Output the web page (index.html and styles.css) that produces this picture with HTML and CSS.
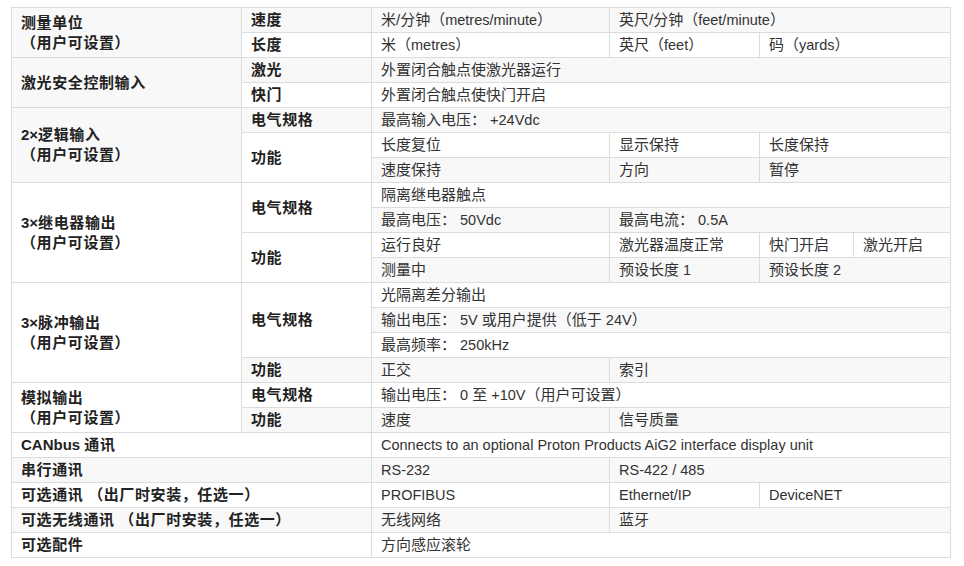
FILE: index.html
```html
<!DOCTYPE html>
<html lang="zh-CN">
<head>
<meta charset="utf-8">
<title>规格</title>
<link rel="stylesheet" href="styles.css">
</head>
<body>
<table class="spec">
  <colgroup>
    <col class="c1"><col class="c2"><col class="c3"><col class="c4"><col class="c5"><col class="c6">
  </colgroup>
  <tbody>
    <tr>
      <th rowspan="2">测量单位<br>（用户可设置）</th>
      <th>速度</th>
      <td>米/分钟（<span class="en">metres/minute</span>）</td>
      <td colspan="3">英尺/分钟（<span class="en">feet/minute</span>）</td>
    </tr>
    <tr>
      <th>长度</th>
      <td>米（<span class="en">metres</span>）</td>
      <td>英尺（<span class="en">feet</span>）</td>
      <td colspan="2">码（<span class="en">yards</span>）</td>
    </tr>
    <tr>
      <th rowspan="2">激光安全控制输入</th>
      <th>激光</th>
      <td colspan="4">外置闭合触点使激光器运行</td>
    </tr>
    <tr>
      <th>快门</th>
      <td colspan="4">外置闭合触点使快门开启</td>
    </tr>
    <tr>
      <th rowspan="3"><span class="en">2×</span>逻辑输入<br>（用户可设置）</th>
      <th>电气规格</th>
      <td colspan="4">最高输入电压：<span class="en"> +24Vdc</span></td>
    </tr>
    <tr>
      <th rowspan="2">功能</th>
      <td>长度复位</td>
      <td>显示保持</td>
      <td colspan="2">长度保持</td>
    </tr>
    <tr>
      <td>速度保持</td>
      <td>方向</td>
      <td colspan="2">暂停</td>
    </tr>
    <tr>
      <th rowspan="4"><span class="en">3×</span>继电器输出<br>（用户可设置）</th>
      <th rowspan="2">电气规格</th>
      <td colspan="4">隔离继电器触点</td>
    </tr>
    <tr>
      <td>最高电压：<span class="en"> 50Vdc</span></td>
      <td colspan="3">最高电流：<span class="en"> 0.5A</span></td>
    </tr>
    <tr>
      <th rowspan="2">功能</th>
      <td>运行良好</td>
      <td>激光器温度正常</td>
      <td>快门开启</td>
      <td>激光开启</td>
    </tr>
    <tr>
      <td>测量中</td>
      <td>预设长度<span class="en"> 1</span></td>
      <td colspan="2">预设长度<span class="en"> 2</span></td>
    </tr>
    <tr>
      <th rowspan="4"><span class="en">3×</span>脉冲输出<br>（用户可设置）</th>
      <th rowspan="3">电气规格</th>
      <td colspan="4">光隔离差分输出</td>
    </tr>
    <tr>
      <td colspan="4">输出电压：<span class="en"> 5V </span>或用户提供（低于<span class="en"> 24V</span>）</td>
    </tr>
    <tr>
      <td colspan="4">最高频率：<span class="en"> 250kHz</span></td>
    </tr>
    <tr>
      <th>功能</th>
      <td>正交</td>
      <td colspan="3">索引</td>
    </tr>
    <tr>
      <th rowspan="2">模拟输出<br>（用户可设置）</th>
      <th>电气规格</th>
      <td colspan="4">输出电压：<span class="en"> 0 </span>至<span class="en"> +10V</span>（用户可设置）</td>
    </tr>
    <tr>
      <th>功能</th>
      <td>速度</td>
      <td colspan="3">信号质量</td>
    </tr>
    <tr>
      <th colspan="2"><span class="en">CANbus </span>通讯</th>
      <td colspan="4" class="en">Connects to an optional Proton Products AiG2 interface display unit</td>
    </tr>
    <tr>
      <th colspan="2">串行通讯</th>
      <td class="en">RS-232</td>
      <td colspan="3" class="en">RS-422 / 485</td>
    </tr>
    <tr>
      <th colspan="2">可选通讯 （出厂时安装，任选一）</th>
      <td class="en">PROFIBUS</td>
      <td class="en">Ethernet/IP</td>
      <td colspan="2" class="en">DeviceNET</td>
    </tr>
    <tr>
      <th colspan="2">可选无线通讯 （出厂时安装，任选一）</th>
      <td>无线网络</td>
      <td colspan="3">蓝牙</td>
    </tr>
    <tr>
      <th colspan="2">可选配件</th>
      <td colspan="4">方向感应滚轮</td>
    </tr>
  </tbody>
</table>
</body>
</html>
```
FILE: styles.css
```css
html, body {
  margin: 0;
  padding: 0;
  background: #fff;
}

body {
  padding: 7px 0 0 11px;
  font-family: "Liberation Sans", Arial, "Noto Sans CJK SC", sans-serif;
  font-size: 15px;
  color: #333;
}

.spec {
  border-collapse: collapse;
  table-layout: fixed;
  width: 939px;
}

.spec .c1 { width: 230px; }
.spec .c2 { width: 130px; }
.spec .c3 { width: 238px; }
.spec .c4 { width: 150px; }
.spec .c5 { width: 94px; }
.spec .c6 { width: 97px; }

.spec th,
.spec td {
  border: 1px solid #dcdcdc;
  padding: 2px 9px;
  line-height: 20px;
  text-align: left;
  vertical-align: middle;
  white-space: nowrap;
}

.spec th {
  font-weight: bold;
  color: #222;
  letter-spacing: 0.6px;
}

.spec td {
  font-weight: normal;
  color: #333;
}

.spec .en {
  font-size: 14.5px;
  letter-spacing: 0;
}

.spec th .en {
  font-size: 15px;
}

.spec tr:nth-child(odd) > th,
.spec tr:nth-child(odd) > td {
  background: #f8f8f8;
}
```
